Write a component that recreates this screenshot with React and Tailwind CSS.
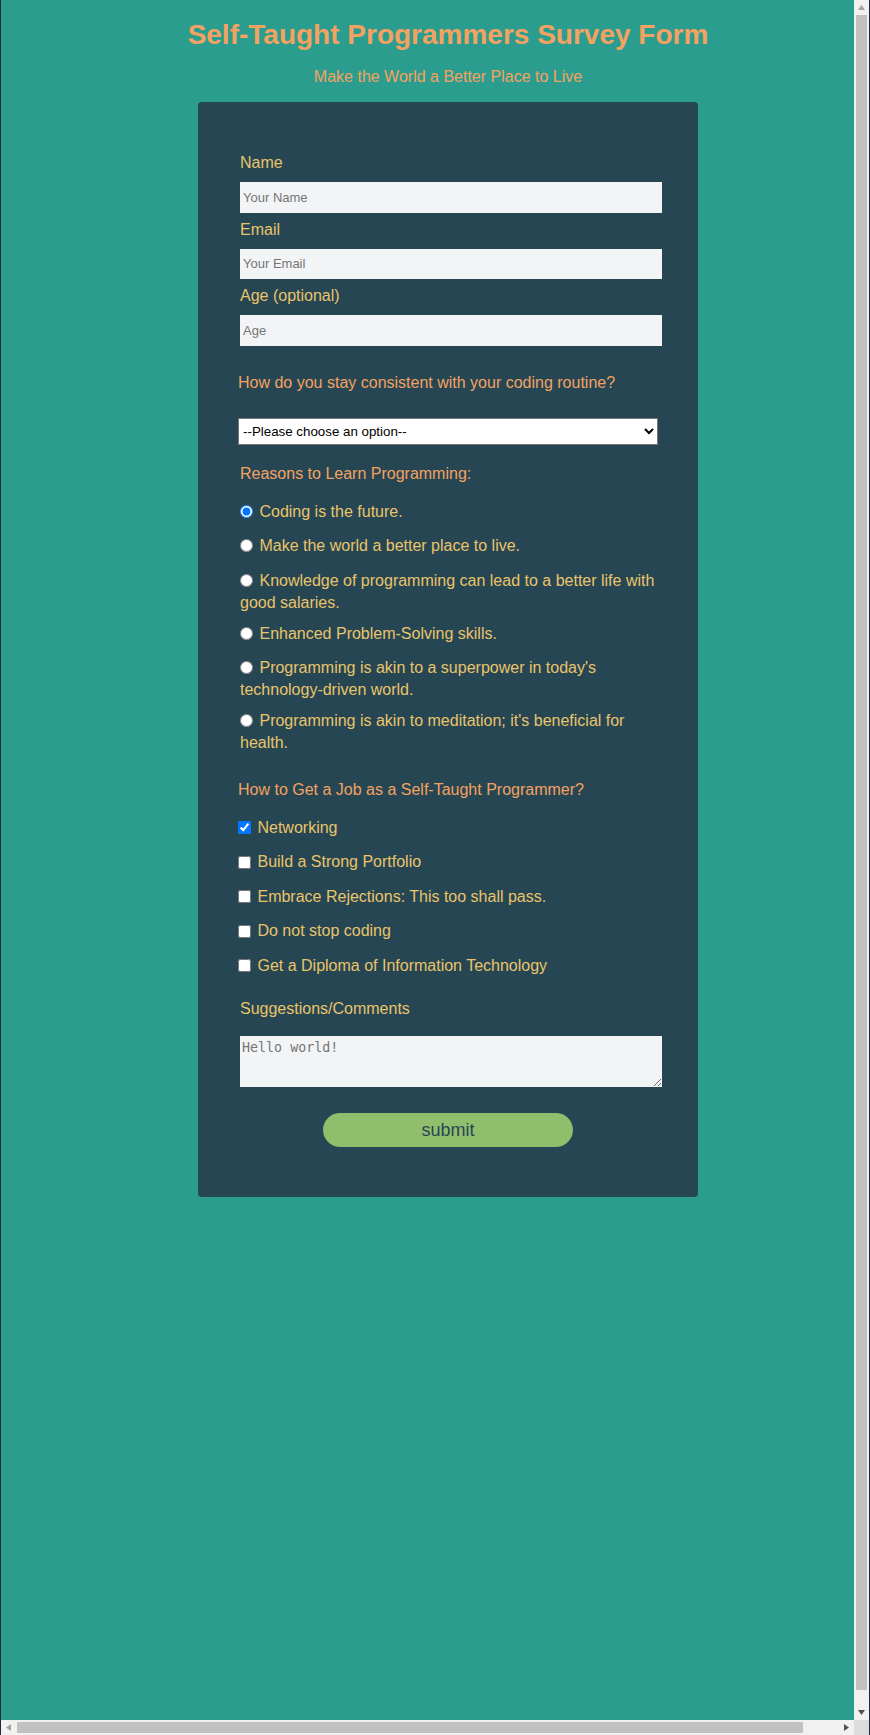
import React from "react";

const radios = [
  { text: "Coding is the future.", two: false, checked: true },
  { text: "Make the world a better place to live.", two: false },
  { text: "Knowledge of programming can lead to a better life with good salaries.", two: true },
  { text: "Enhanced Problem-Solving skills.", two: false },
  { text: "Programming is akin to a superpower in today's technology-driven world.", two: true },
  { text: "Programming is akin to meditation; it's beneficial for health.", two: true, last: true },
];

const checks = [
  { text: "Networking", checked: true },
  { text: "Build a Strong Portfolio" },
  { text: "Embrace Rejections: This too shall pass." },
  { text: "Do not stop coding" },
  { text: "Get a Diploma of Information Technology", last: true },
];

function Arrow({ dir, color, className }) {
  const pts = {
    up: "0,5 3.5,0 7,5",
    down: "0,0 7,0 3.5,5",
    left: "5,0 5,7 0,3.5",
    right: "0,0 5,3.5 0,7",
  }[dir];
  const vertical = dir === "up" || dir === "down";
  return (
    <svg
      className={className}
      width={vertical ? 7 : 5}
      height={vertical ? 5 : 7}
      viewBox={vertical ? "0 0 7 5" : "0 0 5 7"}
    >
      <polygon points={pts} fill={color} />
    </svg>
  );
}

function Scrollbars() {
  return (
    <div aria-hidden="true" className="pointer-events-none fixed inset-0">
      <div className="absolute right-0 top-0 h-full w-px bg-[#1e2a44]" />
      <div className="absolute right-px top-0 h-[1720px] w-[15px] bg-[#f1f1f1]">
        <Arrow dir="up" color="#a3a3a3" className="absolute left-[4px] top-[5px]" />
        <div className="absolute left-[2px] top-[15px] h-[1675px] w-[11px] bg-[#c1c1c1]" />
        <Arrow dir="down" color="#505050" className="absolute bottom-[5px] left-[4px]" />
      </div>
      <div className="absolute bottom-0 left-px h-[15px] w-[853px] bg-[#f1f1f1]">
        <Arrow dir="left" color="#a3a3a3" className="absolute left-[5px] top-[4px]" />
        <div className="absolute left-[16px] top-[2px] h-[11px] w-[786px] bg-[#c1c1c1]" />
        <Arrow dir="right" color="#505050" className="absolute right-[5px] top-[4px]" />
      </div>
      <div className="absolute bottom-0 right-px h-[15px] w-[15px] bg-[#dcdcdc]" />
    </div>
  );
}

export default function App() {
  return (
    <div className="w-[895px] h-[1735px] border-l border-[#1e2a44] bg-[#2a9d8f] font-['Liberation_Sans',Arial,sans-serif]">
      <h1 className="pt-[19px] text-center text-[28px] font-bold leading-[32px] text-[#f4a261]">
        Self-Taught Programmers Survey Form
      </h1>
      <p className="mt-[17px] text-center text-[16px] leading-[18px] text-[#f4a261]">
        Make the World a Better Place to Live
      </p>
      <form
        className="mx-auto mt-[16px] w-[500px] rounded bg-[#264653] pt-[52px] pb-[50px] pl-[40px] pr-[36px]"
        onSubmit={(e) => e.preventDefault()}
      >
        <label className="ml-[2px] block text-[16px] leading-[18px] text-[#e9c46a]">Name</label>
        <input
          type="text"
          placeholder="Your Name"
          className="ml-[2px] mt-[10px] block h-[30.5px] w-[422px] bg-[#f3f4f6] px-[3px] text-[13px] text-[#222] placeholder:text-[#757575] outline-none"
        />
        <label className="ml-[2px] mt-[8px] block text-[16px] leading-[18px] text-[#e9c46a]">Email</label>
        <input
          type="email"
          placeholder="Your Email"
          className="ml-[2px] mt-[10px] block h-[30.5px] w-[422px] bg-[#f3f4f6] px-[3px] text-[13px] text-[#222] placeholder:text-[#757575] outline-none"
        />
        <label className="ml-[2px] mt-[8px] block text-[16px] leading-[18px] text-[#e9c46a]">Age (optional)</label>
        <input
          type="number"
          placeholder="Age"
          className="ml-[2px] mt-[10px] block h-[30.5px] w-[422px] bg-[#f3f4f6] px-[3px] text-[13px] text-[#222] placeholder:text-[#757575] outline-none"
        />

        <p className="mt-[28.5px] text-[16px] leading-[18px] text-[#f4a261]">
          How do you stay consistent with your coding routine?
        </p>
        <select
          defaultValue=""
          className="mt-[26px] block h-[26.5px] w-[420px] border border-[#767676] bg-white text-[13.33px] text-black"
        >
          <option value="">--Please choose an option--</option>
          <option value="schedule">Set a daily schedule</option>
          <option value="goals">Set small goals</option>
          <option value="community">Join a community</option>
        </select>

        <p className="ml-[2px] mt-[20px] text-[16px] leading-[18px] text-[#f4a261]">
          Reasons to Learn Programming:
        </p>
        <div className="ml-[2px] mt-[18.5px]">
          {radios.map((r, i) => (
            <label
              key={i}
              className={
                "block text-[16px] leading-[22.5px] text-[#e9c46a] " +
                (r.last ? "" : r.two ? "mb-[8px]" : "mb-[11.75px]")
              }
            >
              <input type="radio" name="reason" defaultChecked={!!r.checked} className="mr-[2px] align-[-1px]" /> {r.text}
            </label>
          ))}
        </div>

        <p className="mt-[25.75px] text-[16px] leading-[18px] text-[#f4a261]">
          How to Get a Job as a Self-Taught Programmer?
        </p>
        <div className="mt-[18px]">
          {checks.map((c, i) => (
            <label
              key={i}
              className={
                "block text-[16px] leading-[22.5px] text-[#e9c46a] " + (c.last ? "" : "mb-[12px]")
              }
            >
              <input type="checkbox" defaultChecked={!!c.checked} className="mr-[2px] align-[-1.5px]" /> {c.text}
            </label>
          ))}
        </div>

        <label className="ml-[2px] mt-[22.5px] block text-[16px] leading-[18px] text-[#e9c46a]">
          Suggestions/Comments
        </label>
        <textarea
          placeholder="Hello world!"
          className="ml-[2px] mt-[18.5px] block h-[51px] w-[422px] bg-[#f3f4f6] px-[2px] pt-[2px] font-['DejaVu_Sans_Mono',monospace] text-[13.33px] text-[#222] placeholder:text-[#757575] outline-none"
        />
        <button
          type="submit"
          className="ml-[85px] mt-[26px] block h-[34px] w-[250px] rounded-full bg-[#90be6d] text-[18px] text-[#264653]"
        >
          submit
        </button>
      </form>
      <Scrollbars />
    </div>
  );
}
